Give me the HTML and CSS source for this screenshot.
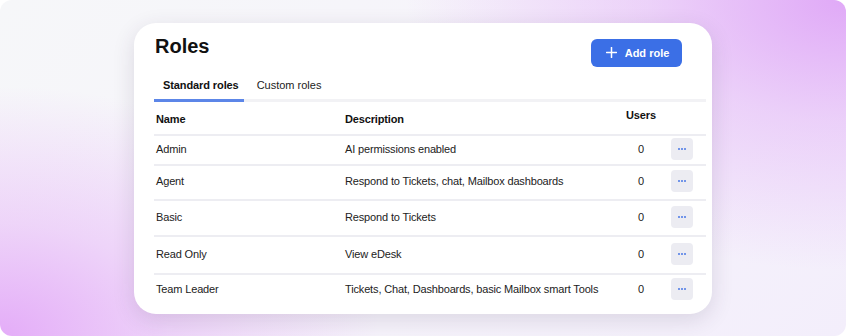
FILE: index.html
```html
<!DOCTYPE html>
<html>
<head>
<meta charset="utf-8">
<link rel="stylesheet" href="styles.css">
</head>
<body>
<div class="frame">
  <div class="card">
    <div class="head">
      <h1 class="title">Roles</h1>
      <button class="add-btn">
        <svg width="11" height="11" viewBox="0 0 11 11"><path d="M5.5 0.5v10M0.5 5.5h10" stroke="#fff" stroke-width="1.5" stroke-linecap="round"/></svg>
        <span>Add role</span>
      </button>
    </div>
    <div class="tabs">
      <div class="tab active">Standard roles</div>
      <div class="tab">Custom roles</div>
    </div>
    <div class="table">
      <div class="row header">
        <div class="c-name">Name</div>
        <div class="c-desc">Description</div>
        <div class="c-users">Users</div>
        <div class="c-act"></div>
      </div>
      <div class="row">
        <div class="c-name">Admin</div>
        <div class="c-desc">AI permissions enabled</div>
        <div class="c-users">0</div>
        <div class="c-act"><button class="more"><i></i><i></i><i></i></button></div>
      </div>
      <div class="row">
        <div class="c-name">Agent</div>
        <div class="c-desc">Respond to Tickets, chat, Mailbox dashboards</div>
        <div class="c-users">0</div>
        <div class="c-act"><button class="more"><i></i><i></i><i></i></button></div>
      </div>
      <div class="row">
        <div class="c-name">Basic</div>
        <div class="c-desc">Respond to Tickets</div>
        <div class="c-users">0</div>
        <div class="c-act"><button class="more"><i></i><i></i><i></i></button></div>
      </div>
      <div class="row">
        <div class="c-name">Read Only</div>
        <div class="c-desc">View eDesk</div>
        <div class="c-users">0</div>
        <div class="c-act"><button class="more"><i></i><i></i><i></i></button></div>
      </div>
      <div class="row last">
        <div class="c-name">Team Leader</div>
        <div class="c-desc">Tickets, Chat, Dashboards, basic Mailbox smart Tools</div>
        <div class="c-users">0</div>
        <div class="c-act"><button class="more"><i></i><i></i><i></i></button></div>
      </div>
    </div>
  </div>
</div>
</body>
</html>
```
FILE: styles.css
```css
html, body {
  margin: 0;
  padding: 0;
  background: #ffffff;
}
body {
  font-family: "Liberation Sans", Arial, sans-serif;
  color: #111;
}
.frame {
  width: 846px;
  height: 336px;
  border-radius: 12px;
  overflow: hidden;
  display: flex;
  align-items: center;
  justify-content: center;
  background:
    radial-gradient(ellipse 440px 270px at 100% 0%, #e0a9f7 0%, rgba(224,169,247,0.45) 45%, rgba(224,169,247,0) 100%),
    radial-gradient(ellipse 380px 250px at 0% 100%, #e4acf8 0%, rgba(228,172,248,0.45) 45%, rgba(228,172,248,0) 100%),
    linear-gradient(135deg, #f6f7f9 0%, #f6f3fb 60%, #f3eefb 100%);
}
.card {
  width: 578px;
  height: 291px;
  box-sizing: border-box;
  background: #fff;
  border-radius: 22px;
  box-shadow: 0 6px 22px rgba(60, 40, 80, 0.14);
  padding: 11px 6px 0 20px;
  display: flex;
  flex-direction: column;
}
.head {
  display: flex;
  justify-content: space-between;
  align-items: flex-start;
  padding-right: 24px;
}
.title {
  margin: 0 0 0 1px;
  font-size: 20px;
  line-height: 24px;
  font-weight: 700;
}
.add-btn {
  margin-top: 5px;
  width: 91px;
  height: 28px;
  border: none;
  border-radius: 6px;
  background: #3b6fe6;
  color: #fff;
  font-family: "Liberation Sans", Arial, sans-serif;
  font-size: 11px;
  font-weight: 700;
  display: flex;
  align-items: center;
  justify-content: center;
  gap: 8px;
  padding: 0 0 0 2px;
}
.tabs {
  margin-top: 7px;
  display: flex;
  border-bottom: 3px solid #f2f2f5;
}
.tab {
  font-size: 11px;
  line-height: 14px;
  padding: 4px 9px 7px 9px;
  margin-bottom: -3px;
  border-bottom: 3px solid transparent;
  color: #222;
}
.tab.active {
  font-weight: 700;
  color: #111;
  border-bottom-color: #5c86e8;
  padding-left: 9px;
  padding-right: 5px;
  letter-spacing: -0.1px;
}
.tab + .tab {
  padding-left: 13px;
}
.table {
  display: flex;
  flex-direction: column;
}
.row {
  display: grid;
  grid-template-columns: 191px 271px 50px 40px;
  align-items: center;
  font-size: 11px;
  letter-spacing: -0.15px;
  color: #222;
  border-bottom: 2px solid #ededf2;
  box-sizing: border-box;
  height: 30px;
  padding-bottom: 2px;
}
.row > div {
  padding-left: 2px;
}
.row .c-desc {
  padding-left: 0;
}
.row.header {
  height: 34px;
  padding-top: 3px;
  padding-bottom: 0;
  font-weight: 700;
  color: #111;
}
.row.header .c-users {
  align-self: start;
  padding-top: 4px;
}
.row:nth-child(2) { height: 30px; }
.row:nth-child(3) { height: 35px; }
.row:nth-child(4) { height: 36px; }
.row:nth-child(5) { height: 38px; }
.row.last { border-bottom: none; height: 30px; }
.c-users {
  text-align: center;
  padding-left: 0 !important;
}
.c-act {
  display: flex;
  padding-left: 5px !important;
}
.more {
  width: 22px;
  height: 22px;
  border: none;
  border-radius: 4px;
  background: #ececf2;
  display: flex;
  align-items: center;
  justify-content: center;
  gap: 1px;
  padding: 0;
}
.more i {
  width: 2px;
  height: 2px;
  border-radius: 1px;
  background: #4a78e6;
}
```
